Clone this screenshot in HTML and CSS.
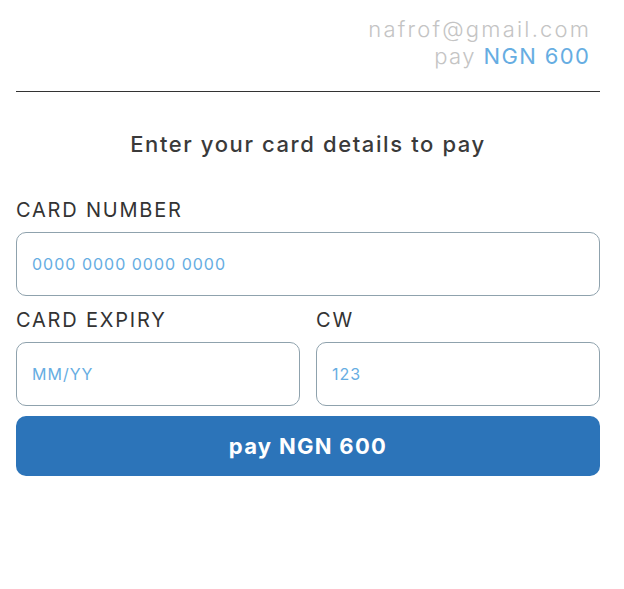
FILE: index.html
```html
<!DOCTYPE html>
<html>
<head>
<meta charset="utf-8">
<link rel="stylesheet" href="styles.css">
</head>
<body>
<div class="page">
  <header class="head">
    <div class="email">nafrof@gmail.com</div>
    <div class="amount">pay <span class="hl">NGN 600</span></div>
  </header>
  <h1 class="title">Enter your card details to pay</h1>
  <form class="form">
    <label class="field">
      <span class="label">CARD NUMBER</span>
      <input class="input" type="text" placeholder="0000 0000 0000 0000">
    </label>
    <div class="row">
      <label class="field">
        <span class="label">CARD EXPIRY</span>
        <input class="input" type="text" placeholder="MM/YY">
      </label>
      <label class="field">
        <span class="label">CW</span>
        <input class="input" type="text" placeholder="123">
      </label>
    </div>
    <button class="btn" type="button">pay NGN 600</button>
  </form>
</div>
</body>
</html>
```

FILE: styles.css
```css
* { box-sizing: border-box; }
html, body { margin: 0; padding: 0; background: #fff; }
body { font-family: Inter, "Open Sans", sans-serif; }
.page { padding: 16px 24px 0 16px; }
.head {
  text-align: right;
  padding-right: 11px;
  padding-bottom: 21px;
  border-bottom: 1px solid #333;
  font-size: 22px;
  font-weight: 300;
  line-height: 27px;
  color: #c4c4c4;
}
.email { letter-spacing: 2.2px; margin-right: -2.2px; }
.amount { letter-spacing: 1.4px; margin-right: -1.4px; }
.hl { color: #66ade2; font-weight: 400; }
.title {
  margin: 36px 0 0;
  text-align: center;
  font-size: 22px;
  font-weight: 500;
  line-height: 32px;
  letter-spacing: 1.6px;
  color: #3a3a3a;
}
.form { margin-top: 36px; display: flex; flex-direction: column; gap: 10px; }
.field { display: flex; flex-direction: column; gap: 8px; flex: 1; min-width: 0; }
.label { font-size: 20px; line-height: 28px; letter-spacing: 1.8px; color: #333; }
.row { display: flex; gap: 16px; }
.input {
  height: 64px;
  border: 1px solid #8fa2ad;
  border-radius: 10px;
  padding: 0 15px;
  font-family: inherit;
  font-size: 16px;
  letter-spacing: 1px;
  outline: none;
}
.input::placeholder { color: #66ade2; }
.btn {
  height: 60px;
  border: 0;
  border-radius: 10px;
  background: #2c74b9;
  color: #fff;
  font-family: inherit;
  font-size: 22px;
  font-weight: 700;
  letter-spacing: 1.3px;
}
```
